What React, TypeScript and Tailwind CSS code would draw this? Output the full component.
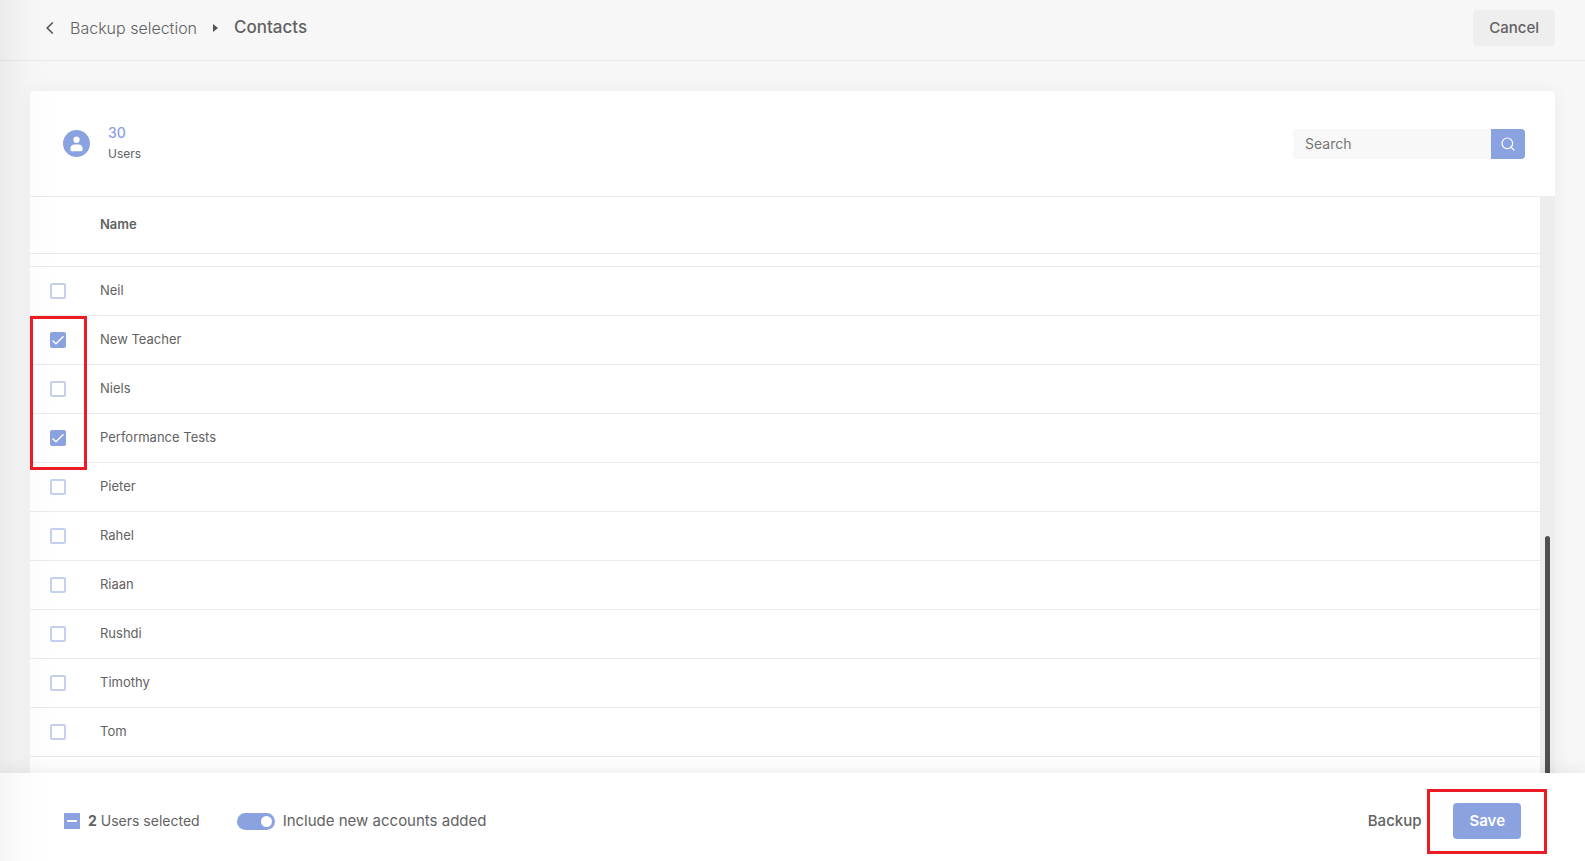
import { useState } from "react";
import { Search } from "lucide-react";

const USERS = [
  "Neil",
  "New Teacher",
  "Niels",
  "Performance Tests",
  "Pieter",
  "Rahel",
  "Riaan",
  "Rushdi",
  "Timothy",
  "Tom",
];

function UserBadge() {
  return (
    <svg viewBox="0 0 27 27" className="size-[27px] shrink-0" aria-hidden="true">
      <circle cx="13.5" cy="13.5" r="13.5" fill="#8aa2df" />
      <ellipse cx="13.5" cy="9.8" rx="3.1" ry="3.3" fill="#fff" />
      <path d="M7.4 18.6c0-3 2.200-4.200 4.300-4.200h3.600c2.100 0 4.300 1.200 4.300 4.200v1.200c0 .9-.5 1.400-1.400 1.400H8.800c-.9 0-1.400-.5-1.400-1.400z" fill="#fff" />
    </svg>
  );
}

function Header() {
  return (
    <header className="flex shrink-0 items-center justify-between border-b border-[#ebebeb] pt-2.5 pr-[30px] pb-3.5 pl-[45px]">
      <nav aria-label="Breadcrumb" className="flex items-center text-base">
        <a href="#" aria-label="Back" className="mr-4">
          <svg viewBox="0 0 9 14" className="h-3.5 w-[9px]" fill="none" stroke="#555" strokeWidth="1.6" aria-hidden="true">
            <path d="M7.800 1.500 2.200 7l5.600 5.500" />
          </svg>
        </a>
        <a href="#" className="font-light">Backup selection</a>
        <svg viewBox="0 0 5 8" className="mx-4 h-2 w-[5px]" fill="#555" aria-hidden="true">
          <path d="M0 0l5 4-5 4z" />
        </svg>
        <span className="text-[17px] font-medium">Contacts</span>
      </nav>
      <button type="button" className="h-9 rounded bg-[#eee] px-4 text-[15px] font-medium">
        Cancel
      </button>
    </header>
  );
}

/* Summary count on the left, search field on the right */
function CardHead() {
  return (
    <div className="flex h-[105px] shrink-0 items-center justify-between pr-[30px] pl-[33px]">
      <div className="flex items-center">
        <UserBadge />
        <div className="ml-[18px] pb-0.5">
          <p className="text-sm leading-[21px] font-medium text-[#8aa2df]">30</p>
          <p className="text-xs leading-[21px]">Users</p>
        </div>
      </div>
      <form className="flex h-[30px]" onSubmit={(e) => e.preventDefault()}>
        <input
          type="text"
          aria-label="Search"
          placeholder="Search"
          className="w-[198px] rounded-l bg-[#f8f8f8] px-3 text-sm outline-none placeholder:text-[#757575]"
        />
        <button type="submit" aria-label="Search" className="flex w-[34px] items-center justify-center rounded-r bg-[#8aa2df] text-white">
          <Search className="size-4" strokeWidth={1.8} />
        </button>
      </form>
    </div>
  );
}

type RowProps = {
  name: string;
  checked: boolean;
  highlighted: boolean;
  onToggle: () => void;
};

function UserRow({ name, checked, highlighted, onToggle }: RowProps) {
  const id = "user-" + name.toLowerCase().replace(" ", "-");
  return (
    <tr className="h-[49px] border-b border-[#ebebeb]">
      <td className="relative w-[70px] pl-5">
        <span className="relative block size-4">
          <input
            id={id}
            type="checkbox"
            checked={checked}
            onChange={onToggle}
            className="peer block size-4 appearance-none rounded-xs border-2 border-[#c5d0f0] bg-white checked:border-[#8aa2df] checked:bg-[#8aa2df]"
          />
          <svg viewBox="0 0 16 16" className="pointer-events-none absolute inset-0 hidden size-4 peer-checked:block" fill="none" stroke="#fff" strokeWidth="1.4" aria-hidden="true">
            <path d="M2.500 8.600 6 11.800l7.500-7.500" />
          </svg>
        </span>
        {highlighted && (
          <span className="pointer-events-none absolute top-0 left-0 z-10 h-[154px] w-[57px] border-3 border-[#ed1c24]" />
        )}
      </td>
      <td>
        <label htmlFor={id}>{name}</label>
      </td>
    </tr>
  );
}

function Footer({ count, onClear }: { count: number; onClear: () => void }) {
  const [include, setInclude] = useState(true);

  return (
    <footer className="relative z-10 flex h-[88px] shrink-0 items-center justify-between bg-white pt-2 pr-16 pl-16 text-[15px] shadow-[0_0_18px_rgba(0,0,0,0.09)]">
      <div className="pointer-events-none absolute inset-y-0 left-0 w-12 bg-linear-to-r from-black/4 via-black/1 to-transparent" />
      <div className="flex items-center">
        <button type="button" aria-label="Clear selection" onClick={onClear} className="flex size-4 items-center justify-center bg-[#8aa2df]">
          <span className="h-0.5 w-2.5 bg-white" />
        </button>
        <span className="ml-2 text-sm">
          <b className="font-bold">{count}</b> Users selected
        </span>
        <label className="ml-[37px] flex items-center gap-2">
          <input
            type="checkbox"
            role="switch"
            checked={include}
            onChange={(e) => setInclude(e.target.checked)}
            className="flex h-[17px] w-[38px] appearance-none items-center rounded-full bg-[#c5c5c5] px-[3px] before:size-[11px] before:rounded-full before:bg-white checked:justify-end checked:bg-[#8aa2df]"
          />
          Include new accounts added
        </label>
      </div>
      <div className="flex items-center gap-8">
        <button type="button" className="font-medium">Backup</button>
        <div className="relative">
          <button type="button" className="block h-9 rounded bg-[#8aa2df] px-4 font-semibold text-white">
            Save
          </button>
          <span className="pointer-events-none absolute -inset-x-[26px] -top-3.5 -bottom-[15px] border-3 border-[#ed1c24]" />
        </div>
      </div>
    </footer>
  );
}

export default function App() {
  const [selected, setSelected] = useState<string[]>(["New Teacher", "Performance Tests"]);

  const toggle = (name: string) =>
    setSelected((prev) => (prev.includes(name) ? prev.filter((n) => n !== name) : [...prev, name]));

  return (
    <div className="relative flex h-screen flex-col overflow-hidden bg-[#f7f7f7] font-['Inter','Liberation_Sans',sans-serif] text-[#626262]">
      <Header />
      <main className="flex min-h-0 flex-1 flex-col px-[30px] pt-[30px]">
        <section className="flex min-h-0 flex-1 flex-col rounded-t bg-white shadow-[0_0_20px_rgba(0,0,0,0.05)]">
          <CardHead />
          <div className="flex min-h-0 flex-1">
            <div className="min-w-0 flex-1 overflow-hidden border-t border-[#ebebeb]">
              <table className="w-full border-collapse text-left text-[13px]">
                <thead>
                  <tr className="h-14 border-b border-[#ebebeb]">
                    <td className="w-[70px]" />
                    <th scope="col" className="font-semibold">Name</th>
                  </tr>
                </thead>
                <tbody>
                  {/* tail of the row scrolled under the head */}
                  <tr className="h-[13px] border-b border-[#ebebeb]" aria-hidden="true">
                    <td colSpan={2} />
                  </tr>
                  {USERS.map((name) => (
                    <UserRow
                      key={name}
                      name={name}
                      checked={selected.includes(name)}
                      highlighted={name === "New Teacher"}
                      onToggle={() => toggle(name)}
                    />
                  ))}
                </tbody>
              </table>
            </div>
            {/* scroll track */}
            <div className="flex w-[15px] flex-col justify-end bg-[#ededed] px-[5px]">
              <div className="h-[41%] rounded-t-full bg-[#505050]" />
            </div>
          </div>
        </section>
      </main>
      {/* shade cast by the side menu */}
      <div className="pointer-events-none absolute inset-y-0 left-0 w-14 bg-linear-to-r from-black/5 via-black/1 to-transparent" />
      <Footer count={selected.length} onClear={() => setSelected([])} />
    </div>
  );
}
